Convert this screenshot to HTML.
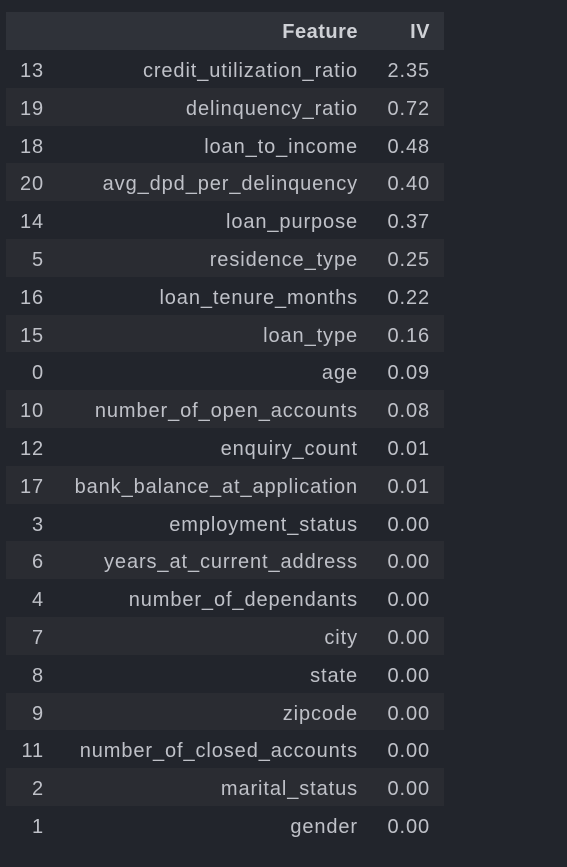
<!DOCTYPE html>
<html><head><style>
body{margin:0;background:#22252c;width:567px;height:867px;overflow:hidden;font-family:"Liberation Sans",sans-serif;font-size:20px;color:#bfc1c8;letter-spacing:0.9px}
.r{position:absolute;left:6px;width:438px;height:37.8px;line-height:42px}
.r.s{background:#2a2c32}
.r.h{background:#2f3239;font-weight:bold;color:#cfd1d6;top:12px;height:38px;line-height:41px;letter-spacing:0.5px}
.r span{position:absolute;text-align:right;white-space:nowrap;margin-right:0}
.i{right:400px}
.f{right:86px}
.v{right:14px}
</style></head><body>
<div class="r h"><span class="f">Feature</span><span class="v">IV</span></div>
<div id="t"></div>
<script>
var d=[[13,"credit_utilization_ratio","2.35"],[19,"delinquency_ratio","0.72"],[18,"loan_to_income","0.48"],[20,"avg_dpd_per_delinquency","0.40"],[14,"loan_purpose","0.37"],[5,"residence_type","0.25"],[16,"loan_tenure_months","0.22"],[15,"loan_type","0.16"],[0,"age","0.09"],[10,"number_of_open_accounts","0.08"],[12,"enquiry_count","0.01"],[17,"bank_balance_at_application","0.01"],[3,"employment_status","0.00"],[6,"years_at_current_address","0.00"],[4,"number_of_dependants","0.00"],[7,"city","0.00"],[8,"state","0.00"],[9,"zipcode","0.00"],[11,"number_of_closed_accounts","0.00"],[2,"marital_status","0.00"],[1,"gender","0.00"]];
var h="";d.forEach(function(x,k){h+='<div class="r'+(k%2?' s':'')+'" style="top:'+(50+k*37.8)+'px"><span class="i">'+x[0]+'</span><span class="f">'+x[1]+'</span><span class="v">'+x[2]+'</span></div>';});
document.getElementById("t").innerHTML=h;
</script>
</body></html>
